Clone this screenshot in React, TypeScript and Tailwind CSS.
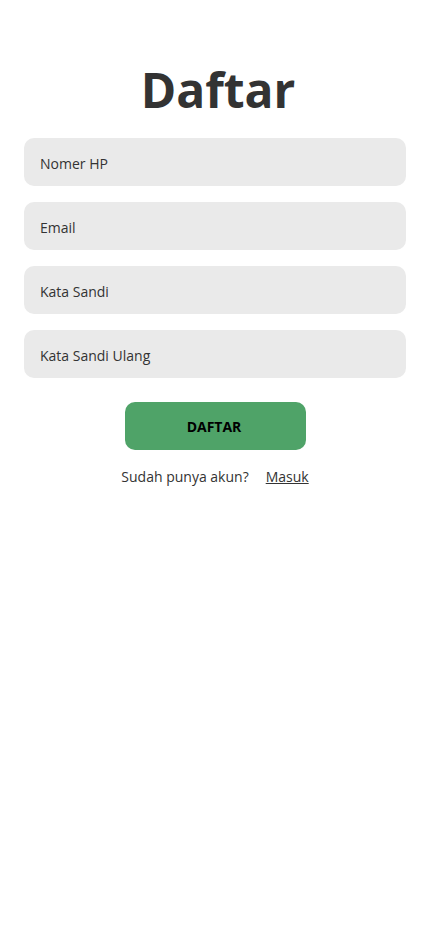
import React from "react";

export default function App() {
  const fields = ["Nomer HP", "Email", "Kata Sandi", "Kata Sandi Ulang"];
  return (
    <div className="min-h-[932px] w-full bg-white" style={{ fontFamily: '"Open Sans", sans-serif' }}>
      <div className="flex flex-col items-center px-6 pt-[66px]">
        <h1 className="pl-[6px] text-[48px] leading-[48px] font-bold text-[#333333]">Daftar</h1>
        <div className="mt-[24px] flex w-full flex-col gap-4">
          {fields.map((f) => (
            <div key={f} className="flex h-12 w-full items-center rounded-[10px] bg-[#eaeaea] px-4 pt-[2px] text-[14px] text-[#333333]">
              {f}
            </div>
          ))}
        </div>
        <button className="mt-6 flex h-12 w-[181px] items-center justify-center rounded-[10px] bg-[#4fa368] pt-px pr-[2px] text-[14px] font-bold text-black">
          DAFTAR
        </button>
        <div className="mt-4 flex items-center gap-[17px] text-[14px] text-[#333333]">
          <span>Sudah punya akun?</span>
          <span className="underline">Masuk</span>
        </div>
      </div>
    </div>
  );
}
